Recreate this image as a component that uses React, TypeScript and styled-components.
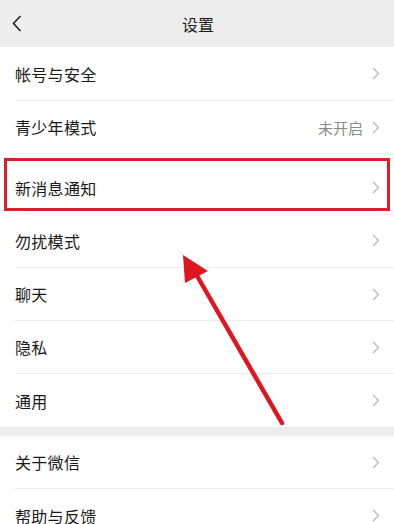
import React from 'react';
import styled, { createGlobalStyle } from 'styled-components';

const GlobalStyle = createGlobalStyle`
  html, body {
    margin: 0;
    padding: 0;
    background: #ffffff;
  }
  body {
    font-family: "Noto Sans CJK SC", "Noto Sans", sans-serif;
  }
`;

const Screen = styled.div`
  width: 394px;
  height: 524px;
  position: relative;
  overflow: hidden;
  background: #ffffff;
`;

const Header = styled.div`
  height: 47px;
  background: #ededed;
  display: flex;
  align-items: center;
  justify-content: center;
  position: relative;
`;

const BackButton = styled.div`
  position: absolute;
  left: 12px;
  top: 15px;
  display: flex;
`;

const Title = styled.div`
  font-size: 16px;
  color: #1b1b1b;
  margin-left: 2px;
`;

const Group = styled.div`
  display: flex;
  flex-direction: column;
`;

const Row = styled.div<{ $h: number; $pt?: number; $last?: boolean }>`
  height: ${({ $h }) => $h}px;
  box-sizing: border-box;
  padding-top: ${({ $pt }) => $pt ?? 0}px;
  padding-left: 15px;
  position: relative;
`;

const RowInner = styled.div<{ $last?: boolean }>`
  height: 100%;
  display: flex;
  align-items: center;
  padding-right: 14px;
  border-bottom: ${({ $last }) => ($last ? 'none' : '1px solid #ececec')};
  box-sizing: border-box;
`;

const Label = styled.div`
  flex: 1;
  font-size: 16px;
  color: #1a1a1a;
  letter-spacing: 0.3px;
`;

const Value = styled.div`
  font-size: 15px;
  color: #8a8a8a;
  margin-right: 9px;
`;

const Highlight = styled.div`
  position: absolute;
  left: 4px;
  right: 4px;
  top: 4px;
  bottom: 3px;
  border: 3px solid #d9202f;
`;

const Spacer = styled.div`
  height: 9px;
  background: #ededed;
`;

const ArrowLayer = styled.svg`
  position: absolute;
  left: 0;
  top: 0;
  pointer-events: none;
`;

const Chevron = () => (
  <svg width="8" height="13" viewBox="0 0 8 13">
    <path d="M1 1 L6.5 6.5 L1 12" fill="none" stroke="#b4b4b4" strokeWidth="1.2" />
  </svg>
);

interface Item {
  label: string;
  value?: string;
  h: number;
  pt?: number;
  highlight?: boolean;
  last?: boolean;
}

const groupA: Item[] = [
  { label: '帐号与安全', h: 54 },
  { label: '青少年模式', value: '未开启', h: 53 },
  { label: '新消息通知', h: 60, pt: 7, highlight: true },
  { label: '勿扰模式', h: 54 },
  { label: '聊天', h: 53 },
  { label: '隐私', h: 53 },
  { label: '通用', h: 53, last: true },
];

const groupB: Item[] = [
  { label: '关于微信', h: 53 },
  { label: '帮助与反馈', h: 53, last: true },
];

const renderRow = (item: Item) => (
  <Row key={item.label} $h={item.h} $pt={item.pt}>
    <RowInner $last={item.last || item.highlight}>
      <Label>{item.label}</Label>
      {item.value && <Value>{item.value}</Value>}
      <Chevron />
    </RowInner>
    {item.highlight && <Highlight />}
  </Row>
);

export default function App() {
  return (
    <Screen>
      <GlobalStyle />
      <Header>
        <BackButton>
          <svg width="10" height="17" viewBox="0 0 10 17">
            <path d="M8.5 1 L1.5 8.5 L8.5 16" fill="none" stroke="#222" strokeWidth="1.6" />
          </svg>
        </BackButton>
        <Title>设置</Title>
      </Header>
      <Group>{groupA.map(renderRow)}</Group>
      <Spacer />
      <Group>{groupB.map(renderRow)}</Group>
      <ArrowLayer width="394" height="524" viewBox="0 0 394 524">
        <line x1="282" y1="423" x2="196" y2="274" stroke="#e0161f" strokeWidth="4.5" strokeLinecap="round" />
        <polygon points="183,255 185,283 208,271" fill="#e0161f" />
      </ArrowLayer>
    </Screen>
  );
}
